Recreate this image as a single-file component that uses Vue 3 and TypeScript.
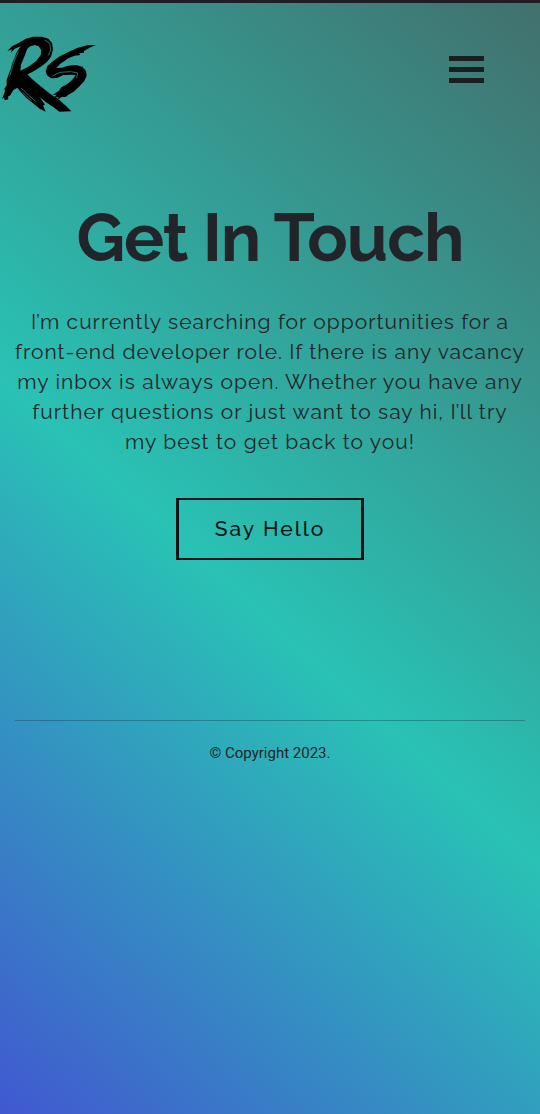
<script setup lang="ts">
import { ref } from 'vue'

const menuOpen = ref<boolean>(false)
const intro: string[] = [
  'I’m currently searching for opportunities for a',
  'front-end developer role. If there is any vacancy',
  'my inbox is always open. Whether you have any',
  'further questions or just want to say hi, I’ll try',
  'my best to get back to you!',
]
</script>

<template>
  <div class="page">
    <header class="bar">
      <a class="brand" href="#" aria-label="Home">
        <svg viewBox="0 99 300 240" width="100" height="80" aria-hidden="true">
          <path d="M22 153 L36 139 L54 130 L78 116 L100 110 L126 110 L145 116 L156 129 L159 148 L153 170 L140 187 L120 202 L97 216 L82 223 L96 237 L121 258 L148 280 L178 300 L199 319 L214 334 L178 335 L163 323 L137 306 L119 291 L135 314 L129 316 L137 335 L119 326 L98 309 L79 294 L59 272 L52 263 L40 270 L31 286 L24 290 L25 298 L14 301 L12 292 L6 298 L15 273 L13 267 L20 255 L20 239 L33 205 L36 190 L50 157 L62 139 L44 146 L32 158 L36 148 Z M82 146 L75 165 L63 194 L61 212 L84 201 L108 184 L122 166 L124 151 L116 139 L104 135 L91 139 Z" fill-rule="evenodd" />
          <path d="M287 135 L269 143 L252 153 L252 158 L237 160 L241 165 L224 167 L206 174 L181 191 L169 204 L185 203 L205 197 L228 195 L247 200 L258 213 L260 227 L253 243 L237 260 L221 275 L205 284 L197 291 L185 291 L170 301 L176 291 L160 294 L170 284 L158 285 L177 272 L184 262 L202 252 L217 239 L227 226 L216 224 L190 225 L171 234 L153 235 L141 226 L137 214 L142 199 L153 188 L177 170 L205 156 L232 144 L262 136 Z" />
          <path class="scratch" d="M134 120 L149 130 L152 150 L145 166 M55 154 L41 188 L29 229 M46 167 L26 214 M64 264 L86 286 L107 304 M68 277 L94 302 M157 228 L180 217 L213 215 L233 219 L230 234" />
        </svg>
      </a>
      <button class="menu" type="button" aria-label="Menu" :aria-expanded="menuOpen" @click="menuOpen = !menuOpen">
        <span></span><span></span><span></span>
      </button>
    </header>

    <main class="contact">
      <h1>Get In Touch</h1>
      <p><template v-for="line in intro" :key="line">{{ line }}<br /></template></p>
      <a class="hello" href="mailto:">Say Hello</a>
    </main>

    <footer class="foot">© Copyright 2023.</footer>
  </div>
</template>

<style>
body {
  margin: 0;
}
</style>

<style scoped>
.page {
  box-sizing: border-box;
  min-height: 100vh;
  border-top: 3px solid #201e24;
  background: linear-gradient(42deg, #4158d0 0%, #29c2b5 46%, #42706d 100%) padding-box;
  color: #212529;
  font-family: Raleway, Lato, sans-serif;
}
.bar {
  display: flex;
  align-items: center;
  justify-content: space-between;
  padding: 30px 56px 0 0;
}
.brand,
.brand svg {
  display: block;
}
.scratch {
  fill: none;
  stroke: #34a096;
  stroke-width: 2;
}
.menu {
  display: flex;
  flex-direction: column;
  gap: 6px;
  margin: 0 0 8px;
  padding: 0;
  border: 0;
  background: none;
  cursor: pointer;
}
.menu span {
  width: 35px;
  height: 5px;
  background: #181f1e;
}
.contact {
  display: flex;
  flex-direction: column;
  align-items: center;
  padding: 85px 0 160px;
  text-align: center;
}
h1 {
  margin: 0;
  font-size: 67px;
  font-weight: 700;
  line-height: 80px;
  letter-spacing: -1px;
}
p {
  margin: 29px 0 41px;
  font-size: 21px;
  font-weight: 400;
  line-height: 30px;
  letter-spacing: 1px;
  white-space: nowrap;
}
.hello {
  box-sizing: border-box;
  padding: 14px 36px;
  border: solid #0c1413;
  border-width: 2px 3px;
  color: #0c1413;
  font-size: 21px;
  font-weight: 500;
  line-height: 30px;
  letter-spacing: 2px;
  text-decoration: none;
}
.foot {
  margin: 0 15px;
  padding-top: 20px;
  border-top: 1px solid rgba(20, 50, 70, 0.35);
  font-family: Roboto, sans-serif;
  font-size: 15px;
  line-height: 24px;
  text-align: center;
}
</style>
